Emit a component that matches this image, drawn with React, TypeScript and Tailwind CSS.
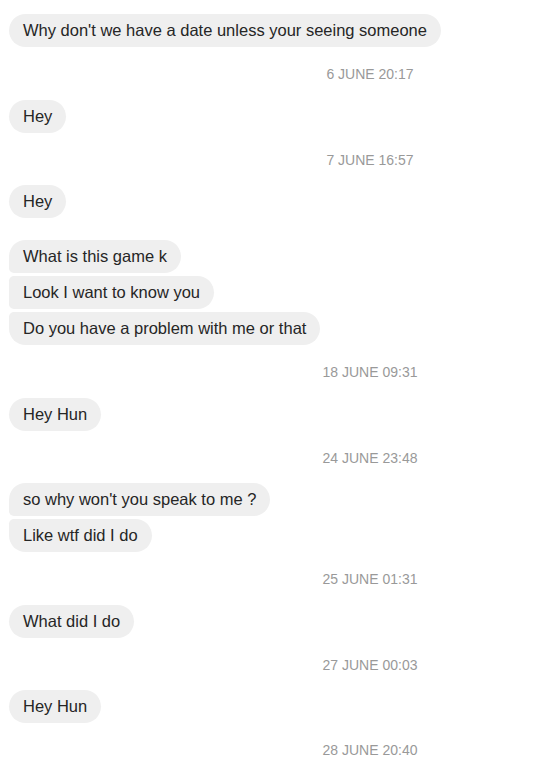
import React from 'react';
import clsx from 'clsx';

type Item =
  | { kind: 'time'; text: string }
  | { kind: 'group'; lines: string[]; gap?: boolean };

const THREAD: Item[] = [
  { kind: 'group', lines: ["Why don't we have a date unless your seeing someone"] },
  { kind: 'time', text: '6 JUNE 20:17' },
  { kind: 'group', lines: ['Hey'] },
  { kind: 'time', text: '7 JUNE 16:57' },
  { kind: 'group', lines: ['Hey'] },
  {
    kind: 'group',
    gap: true,
    lines: ['What is this game k', 'Look I want to know you', 'Do you have a problem with me or that'],
  },
  { kind: 'time', text: '18 JUNE 09:31' },
  { kind: 'group', lines: ['Hey Hun'] },
  { kind: 'time', text: '24 JUNE 23:48' },
  { kind: 'group', lines: ["so why won't you speak to me ?", 'Like wtf did I do'] },
  { kind: 'time', text: '25 JUNE 01:31' },
  { kind: 'group', lines: ['What did I do'] },
  { kind: 'time', text: '27 JUNE 00:03' },
  { kind: 'group', lines: ['Hey Hun'] },
  { kind: 'time', text: '28 JUNE 20:40' },
];

const Bubble: React.FC<{ text: string; first: boolean; last: boolean }> = ({ text, first, last }) => (
  <div
    className={clsx(
      'self-start bg-[#efefef] text-[#262626] px-[14px] py-[7px] text-[16.5px] leading-[19px] rounded-r-[17px]',
      first ? 'rounded-tl-[17px]' : 'rounded-tl-[5px]',
      last ? 'rounded-bl-[17px]' : 'rounded-bl-[5px]'
    )}
  >
    {text}
  </div>
);

export default function App() {
  return (
    <div
      className="w-[550px] h-[770px] overflow-hidden bg-white flex flex-col pt-[14px] pl-[9px]"
      style={{ fontFamily: '"Liberation Sans", Arial, sans-serif' }}
    >
      {THREAD.map((item, i) =>
        item.kind === 'time' ? (
          <div
            key={i}
            className="pl-[181px] pt-[19px] pb-[16.5px] text-center text-[14px] leading-[17px] text-[#999999]"
          >
            {item.text}
          </div>
        ) : (
          <div key={i} className={clsx('flex flex-col gap-[3px]', item.gap && 'mt-[22px]')}>
            {item.lines.map((line, j) => (
              <Bubble key={j} text={line} first={j === 0} last={j === item.lines.length - 1} />
            ))}
          </div>
        )
      )}
    </div>
  );
}
